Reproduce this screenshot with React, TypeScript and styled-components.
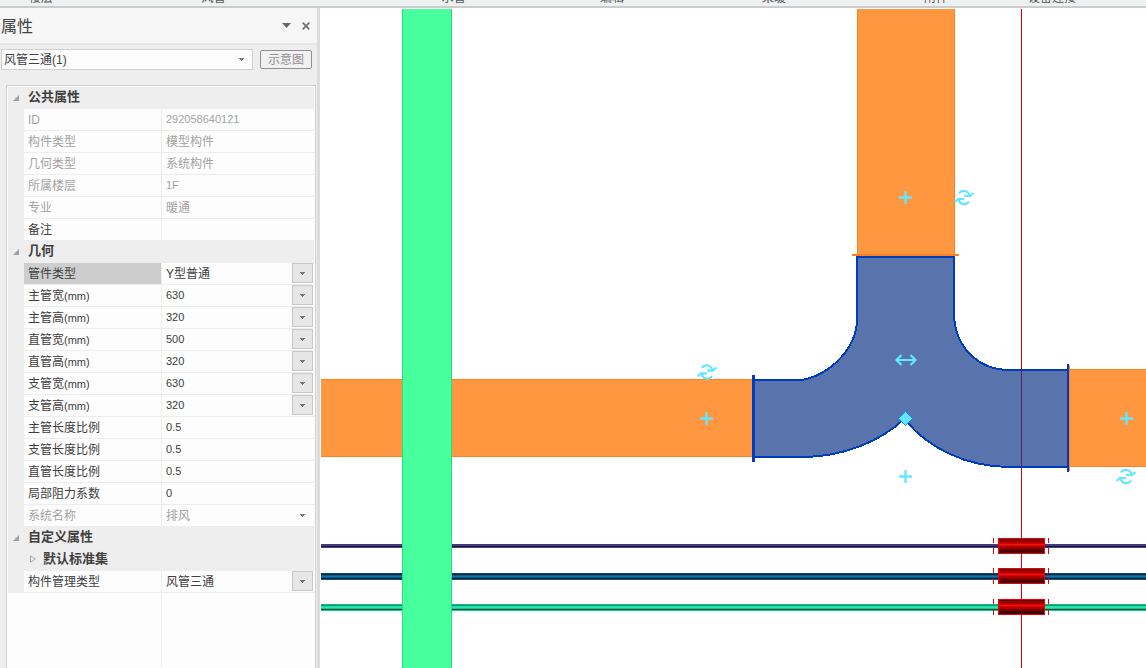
import React from "react";
import styled, { createGlobalStyle } from "styled-components";

const GlobalStyle = createGlobalStyle`
  * { box-sizing: border-box; }
  body {
    margin: 0;
    font-family: "Liberation Sans", "Noto Sans CJK SC", sans-serif;
    font-size: 12px;
    color: #404040;
    background: #fff;
  }
  input, select, button { font: inherit; color: inherit; }
`;

const Page = styled.div`
  display: flex;
  flex-direction: column;
  height: 100vh;
  overflow: hidden;
`;

const Ribbon = styled.header`
  display: flex;
  flex: none;
  align-items: flex-end;
  height: 8px;
  overflow: hidden;
  background: #edf1f2;
  border-bottom: 2px solid #cccccc;
`;

const RibbonGroup = styled.span<{ $width: number }>`
  flex: 0 0 ${(p) => p.$width}px;
  line-height: 16px;
  text-align: center;
  color: #555;
`;

const Workspace = styled.main`
  display: flex;
  flex: 1;
  min-height: 0;
`;

const Panel = styled.aside`
  display: flex;
  flex: none;
  flex-direction: column;
  width: 321px;
  background: #eeeeee;
  border-right: 1px solid #fff;
  box-shadow: inset -3px 0 0 #dcdcdc;
`;

const TitleBar = styled.div`
  display: flex;
  align-items: center;
  height: 37px;
  margin-right: 3px;
  padding: 0 2px 0 1px;
  background: #f6f6f6;
  border-bottom: 2px solid #e6e6e6;
`;

const Title = styled.h1`
  flex: 1;
  margin: 0;
  padding-top: 2px;
  font-size: 16px;
  font-weight: 400;
  line-height: 24px;
`;

const IconButton = styled.button`
  display: flex;
  align-items: center;
  justify-content: center;
  width: 19px;
  height: 20px;
  padding: 0;
  border: 0;
  background: none;
`;

const PickerRow = styled.div`
  display: flex;
  gap: 7px;
  height: 40px;
  padding: 4px 8px 0 1px;
`;

const SelectBox = styled.span`
  position: relative;
  display: flex;
  flex: 1;
  min-width: 0;
  height: 21px;
`;

const ObjectSelect = styled.select`
  flex: 1;
  height: 21px;
  padding: 0 2px;
  appearance: none;
  background: #fdfdfd;
  border: 1px solid #d0d0d0;
  border-radius: 0;
`;

const DiagramButton = styled.button`
  width: 52px;
  height: 19px;
  margin-top: 1px;
  padding: 0;
  line-height: 16px;
  color: #909090;
  background: #f1f1f1;
  border: 1px solid #909090;
  border-radius: 2px;
`;

const ArrowCell = styled.span<{ $boxed?: boolean }>`
  position: absolute;
  top: 0;
  right: 1px;
  display: flex;
  align-items: center;
  justify-content: center;
  width: 21px;
  height: 20px;
  pointer-events: none;
  border: 1px solid ${(p) => (p.$boxed ? "#c8c8c8" : "transparent")};
  background: ${(p) => (p.$boxed ? "#e6e6e6" : "transparent")};
`;

const GridFrame = styled.section`
  display: flex;
  flex: 1;
  flex-direction: column;
  min-height: 0;
  margin: 0 4px 0 6px;
  padding: 1px;
  background: #fdfdfd;
  border: 1px solid #d0d0d0;
  border-bottom: 0;
`;

const PropertyTable = styled.table`
  width: 100%;
  table-layout: fixed;
  border-collapse: separate;
  border-spacing: 0;
  text-align: left;
`;

const Column = styled.col<{ $width?: number }>`
  width: ${(p) => (p.$width ? p.$width + "px" : "auto")};
`;

const Gutter = styled.td`
  height: 22px;
  padding: 0 0 2px;
  background: #eeeeee;
`;

const GroupHeading = styled.th<{ $nested?: boolean }>`
  height: 22px;
  padding: 0 0 2px ${(p) => (p.$nested ? 6 : 4)}px;
  font-size: 13px;
  font-weight: 700;
  line-height: 20px;
  background: #eeeeee;

  svg { margin-right: 7px; }
`;

const NameCell = styled.th<{ $dim?: boolean; $selected?: boolean }>`
  height: 22px;
  padding: 0 0 0 4px;
  font-weight: 400;
  line-height: 20px;
  color: ${(p) => (p.$dim ? "#a3a3a3" : "inherit")};
  background: ${(p) => (p.$selected ? "#cdcdcd" : "#fdfdfd")};
  border-right: 1px solid #ededed;
  border-bottom: 1px solid #ededed;
`;

const Unit = styled.span`
  font-size: 11px;
`;

const ValueCell = styled.td<{ $dim?: boolean }>`
  height: 22px;
  padding: 0;
  color: ${(p) => (p.$dim ? "#a3a3a3" : "inherit")};
  border-bottom: 1px solid #ededed;
`;

const ValueInput = styled.input<{ $numeric: boolean }>`
  display: block;
  width: 100%;
  height: 21px;
  padding: 0 4px 2px;
  font-size: ${(p) => (p.$numeric ? 11 : 12)}px;
  background: transparent;
  border: 0;
  outline: 0;
`;

const ValueSelect = styled.select<{ $numeric: boolean }>`
  flex: 1;
  min-width: 0;
  height: 21px;
  padding: ${(p) => (p.$numeric ? "0 24px 2px 4px" : "0 24px 0 4px")};
  font-size: ${(p) => (p.$numeric ? 11 : 12)}px;
  appearance: none;
  background: transparent;
  border: 0;
  border-radius: 0;

  &:disabled { opacity: 1; color: #a3a3a3; }
`;

const EmptyArea = styled.div`
  flex: 1;
  width: 154px;
  border-right: 1px solid #ededed;
`;

const Viewport = styled.section`
  flex: 1;
  min-width: 0;
  background: #fff;

  svg { display: block; width: 100%; height: 100%; }
`;

const SmallArrow = () => (
  <svg width="5" height="3" viewBox="0 0 5 3" aria-hidden="true">
    <path d="M0 0h5v1h-1v1h-1v1h-1v-1h-1v-1h-1z" fill="#777" />
  </svg>
);

const OpenMark = () => (
  <svg width="6" height="6" viewBox="0 0 6 6" aria-hidden="true">
    <path d="M6 0v6H0z" fill="#a0a0a0" />
  </svg>
);

const ClosedMark = () => (
  <svg width="6" height="8" viewBox="0 0 6 8" aria-hidden="true">
    <path d="M.5 .8v6.400L5.300 4z" fill="none" stroke="#a8a8a8" />
  </svg>
);

type Property = {
  name: string;
  value: string;
  unit?: string;
  kind?: "fixed" | "text" | "choice" | "lockedChoice";
  selected?: boolean;
};

type Group = { title: string; nestedTitle?: string; rows: Property[] };

const groups: Group[] = [
  {
    title: "公共属性",
    rows: [
      { name: "ID", value: "292058640121", kind: "fixed" },
      { name: "构件类型", value: "模型构件", kind: "fixed" },
      { name: "几何类型", value: "系统构件", kind: "fixed" },
      { name: "所属楼层", value: "1F", kind: "fixed" },
      { name: "专业", value: "暖通", kind: "fixed" },
      { name: "备注", value: "" },
    ],
  },
  {
    title: "几何",
    rows: [
      { name: "管件类型", value: "Y型普通", kind: "choice", selected: true },
      { name: "主管宽", unit: "(mm)", value: "630", kind: "choice" },
      { name: "主管高", unit: "(mm)", value: "320", kind: "choice" },
      { name: "直管宽", unit: "(mm)", value: "500", kind: "choice" },
      { name: "直管高", unit: "(mm)", value: "320", kind: "choice" },
      { name: "支管宽", unit: "(mm)", value: "630", kind: "choice" },
      { name: "支管高", unit: "(mm)", value: "320", kind: "choice" },
      { name: "主管长度比例", value: "0.5" },
      { name: "支管长度比例", value: "0.5" },
      { name: "直管长度比例", value: "0.5" },
      { name: "局部阻力系数", value: "0" },
      { name: "系统名称", value: "排风", kind: "lockedChoice" },
    ],
  },
  {
    title: "自定义属性",
    nestedTitle: "默认标准集",
    rows: [{ name: "构件管理类型", value: "风管三通", kind: "choice" }],
  },
];

const PropertyRow = ({ row }: { row: Property }) => {
  const kind = row.kind ?? "text";
  const dim = kind === "fixed" || kind === "lockedChoice";
  const numeric = /^[\d.]+F?$/.test(row.value);
  const id = "prop-" + row.name;
  const isChoice = kind === "choice" || kind === "lockedChoice";
  return (
    <tr>
      <Gutter />
      <NameCell scope="row" $dim={dim} $selected={row.selected}>
        <label htmlFor={id}>
          {row.name}
          {row.unit && <Unit>{row.unit}</Unit>}
        </label>
      </NameCell>
      <ValueCell $dim={dim}>
        {isChoice ? (
          <SelectBox>
            <ValueSelect id={id} $numeric={numeric} disabled={dim} defaultValue={row.value}>
              <option>{row.value}</option>
            </ValueSelect>
            <ArrowCell $boxed={!dim}>
              <SmallArrow />
            </ArrowCell>
          </SelectBox>
        ) : (
          <ValueInput id={id} $numeric={numeric} readOnly={dim} defaultValue={row.value} />
        )}
      </ValueCell>
    </tr>
  );
};

const ribbonGroups = [
  { name: "楼层", width: 82 },
  { name: "风管", width: 263 },
  { name: "水管", width: 217 },
  { name: "编辑", width: 100 },
  { name: "采暖", width: 224 },
  { name: "附件", width: 100 },
  { name: "设备连接", width: 132 },
];

const Plus = ({ x, y }: { x: number; y: number }) => (
  <path
    d={`M${x - 6} ${y + 0.5}h13M${x + 0.5} ${y - 6}v13`}
    stroke="#63e6ff"
    strokeWidth="2.4"
    fill="none"
  />
);

const Rotate = ({ x, y }: { x: number; y: number }) => (
  <g transform={`translate(${x} ${y})`} fill="none" stroke="#63e6ff" strokeWidth="2.2">
    <path d="M-5 -3.500C-2.500 -7.500 4.500 -7 5.500 -1" />
    <path d="M0 -1H6L9.500 -4" />
    <path d="M5 4.500C2.500 8.500 -4.500 8 -5.500 2" />
    <path d="M0 2H-6L-9.500 5" />
    <path d="M1 -1L5.500 -1L5 -3.500M-1 2L-5.500 2L-5 4.500" />
  </g>
);

const pipes = [
  { y: 544, bands: ["#423c7c", "#423c7c", "#1c1838", "#4a4380"] },
  { y: 573, bands: ["#07496e", "#06293e", "#0b5f8e", "#0d78b2", "#0a5680", "#041c2b", "#0a5680"] },
  { y: 604, bands: ["#08bd88", "#0b8f69", "#1fe0a8", "#27e8b2", "#16c792", "#064f3a", "#12c993"] },
];

const valves = [538, 568, 599];
const valveBands = ["#5a0000", "#a00000", "#8c0000", "#b40000", "#d40000", "#f01414", "#d80000", "#b80000", "#a00000", "#880000", "#700000", "#560000", "#3c0000"];

const Drawing = () => (
  <svg role="img" aria-label="风管三通平面图">
    {/* Model coordinates start left of and above the visible area. */}
    <g transform="translate(-321 -8)" shapeRendering="crispEdges">
      <g fill="#ff9640" stroke="#ff801c">
        <rect x="857.5" y="-10" width="97" height="266" />
        <rect x="300.5" y="379.5" width="453" height="77" />
        <rect x="1068.5" y="369.500" width="3000" height="97" />
      </g>
      <rect x="852" y="254" width="107" height="2" fill="#ff801c" />
      <rect x="1069" y="365" width="1" height="106" fill="#ff801c" />

      {pipes.map((pipe) =>
        pipe.bands.map((color, i) => (
          <rect key={pipe.y + i} x="321" y={pipe.y + i} width="100%" height="1" fill={color} />
        ))
      )}
      <rect x="402.5" y="-10" width="49" height="4000" fill="#47ff9c" stroke="#1fe27c" />
      <rect x="1021" y="9" width="1" height="4000" fill="#e00000" />

      {valves.map((y) => (
        <g key={y}>
          <path d={`M993 ${y}h1v5h-1zM993 ${y + 10}h1v6h-1zM1048 ${y}h1v5h-1zM1048 ${y + 10}h1v6h-1z`} fill="#f00000" />
          {valveBands.map((color, i) => (
            <rect key={i} x="999" y={y + 1 + i} width="45" height="2" fill={color} />
          ))}
          <rect x="998.5" y={y + 0.5} width="46" height="15" fill="none" stroke="#f00000" />
        </g>
      ))}

      <path
        d="M857 257H954V315C955 345 976 370 1010 370H1068V467H1010C965 467 928 447 906 421L904 419C882 440 845 457 802 457H754V380H802C833 374 857 346 857 319Z"
        fill="#5973ad"
        stroke="#003cbe"
        strokeWidth="2"
      />
      <rect x="752" y="375" width="3" height="87" fill="#003cbe" />
      <rect x="1067" y="364" width="2" height="108" fill="#003cbe" />
      <rect x="1021" y="371" width="1" height="95" fill="#55265d" />

      <g shapeRendering="auto">
        <path d="M905.500 411.500L912.500 418.500L905.500 425.500L898.500 418.500Z" fill="#63e6ff" stroke="#1987f5" />
        <path d="M897 360H915M901.500 355L896.500 360L901.500 365M910.500 355L915.500 360L910.500 365" fill="none" stroke="#63e6ff" strokeWidth="2.2" />
        <Rotate x={964} y={197} />
        <Rotate x={707} y={371.5} />
        <Rotate x={1126} y={476} />
        <Plus x={905} y={197} />
        <Plus x={706} y={418} />
        <Plus x={1126} y={418} />
        <Plus x={905} y={476} />
      </g>
    </g>
    <rect width="100%" height="1" fill="#fff" />
  </svg>
);

export default function App() {
  return (
    <Page>
      <GlobalStyle />
      <Ribbon>
        {ribbonGroups.map((group) => (
          <RibbonGroup key={group.name} $width={group.width}>
            {group.name}
          </RibbonGroup>
        ))}
      </Ribbon>
      <Workspace>
        <Panel>
          <TitleBar>
            <Title>属性</Title>
            <IconButton type="button" aria-label="面板菜单">
              <svg width="9" height="5" viewBox="0 0 9 5">
                <path d="M0 0h9L4.500 5z" fill="#666" />
              </svg>
            </IconButton>
            <IconButton type="button" aria-label="关闭">
              <svg width="8" height="8" viewBox="0 0 8 8">
                <path d="M.7 .7l6.600 6.600M7.300 .7L.7 7.300" stroke="#707070" strokeWidth="1.700" />
              </svg>
            </IconButton>
          </TitleBar>
          <PickerRow>
            <SelectBox>
              <ObjectSelect aria-label="所选构件" defaultValue="风管三通(1)">
                <option>风管三通(1)</option>
              </ObjectSelect>
              <ArrowCell>
                <SmallArrow />
              </ArrowCell>
            </SelectBox>
            <DiagramButton type="button">示意图</DiagramButton>
          </PickerRow>
          <GridFrame>
            <PropertyTable>
              <colgroup>
                <Column $width={16} />
                <Column $width={138} />
                <Column />
              </colgroup>
              {groups.map((group) => (
                <tbody key={group.title}>
                  <tr>
                    <Gutter align="center">
                      <OpenMark />
                    </Gutter>
                    <GroupHeading colSpan={2} scope="rowgroup">
                      {group.title}
                    </GroupHeading>
                  </tr>
                  {group.nestedTitle && (
                    <tr>
                      <Gutter />
                      <GroupHeading colSpan={2} scope="rowgroup" $nested>
                        <ClosedMark />
                        {group.nestedTitle}
                      </GroupHeading>
                    </tr>
                  )}
                  {group.rows.map((row) => (
                    <PropertyRow key={row.name} row={row} />
                  ))}
                </tbody>
              ))}
            </PropertyTable>
            <EmptyArea />
          </GridFrame>
        </Panel>
        <Viewport>
          <Drawing />
        </Viewport>
      </Workspace>
    </Page>
  );
}
